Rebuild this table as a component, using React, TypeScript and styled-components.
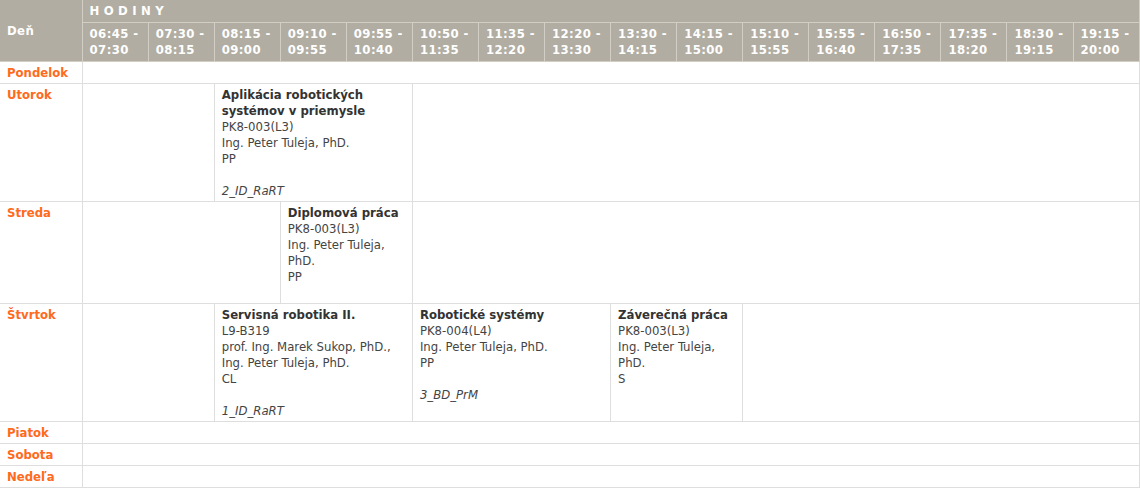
import React from 'react';
import styled, { createGlobalStyle } from 'styled-components';

const GlobalStyle = createGlobalStyle`
  body {
    margin: 0;
    background: #fff;
    font-family: 'DejaVu Sans Condensed', 'DejaVu Sans', sans-serif;
    font-size: 13px;
    color: #333;
  }
`;

const Table = styled.table`
  width: 1140px;
  border-collapse: collapse;
  table-layout: fixed;
  line-height: 16px;
`;

const HeadCell = styled.th<{ $spaced?: boolean }>`
  background: #b1ada2;
  color: #fff;
  font-weight: bold;
  text-align: left;
  white-space: nowrap;
  overflow: hidden;
  vertical-align: ${p => (p.$spaced ? 'top' : 'middle')};
  padding: ${p => (p.$spaced ? '3px 7px 3px' : '3px 6px 3px 7px')};
  border: 1px solid #d2cec6;
  border-top: none;
  letter-spacing: ${p => (p.$spaced ? '4.4px' : '0.4px')};
`;

const DayHead = styled(HeadCell)`
  border-left: none;
`;

const DayCell = styled.td`
  color: #ff6a1c;
  font-weight: bold;
  vertical-align: top;
  padding: 3px 7px 2px;
  border: 1px solid #dedede;
  border-left: none;
`;

const Cell = styled.td`
  vertical-align: top;
  padding: 3px 7px 2px;
  border: 1px solid #dedede;
`;

const Title = styled.div`
  font-weight: bold;
  color: #333;
`;

const Line = styled.div`
  color: #444;
`;

const Gap = styled.div`
  height: 16px;
`;

const Note = styled.div`
  font-style: italic;
  color: #444;
`;

type Lesson = {
  span: number;
  title?: string;
  lines?: string[];
  note?: string;
};

const slots = [
  ['06:45', '07:30'], ['07:30', '08:15'], ['08:15', '09:00'], ['09:10', '09:55'],
  ['09:55', '10:40'], ['10:50', '11:35'], ['11:35', '12:20'], ['12:20', '13:30'],
  ['13:30', '14:15'], ['14:15', '15:00'], ['15:10', '15:55'], ['15:55', '16:40'],
  ['16:50', '17:35'], ['17:35', '18:20'], ['18:30', '19:15'], ['19:15', '20:00'],
];

const days: { name: string; cells: Lesson[] }[] = [
  { name: 'Pondelok', cells: [{ span: 16 }] },
  {
    name: 'Utorok',
    cells: [
      { span: 2 },
      {
        span: 3,
        title: 'Aplikácia robotických systémov v priemysle',
        lines: ['PK8-003(L3)', 'Ing. Peter Tuleja, PhD.', 'PP'],
        note: '2_ID_RaRT',
      },
      { span: 11 },
    ],
  },
  {
    name: 'Streda',
    cells: [
      { span: 3 },
      {
        span: 2,
        title: 'Diplomová práca',
        lines: ['PK8-003(L3)', 'Ing. Peter Tuleja, PhD.', 'PP'],
      },
      { span: 11 },
    ],
  },
  {
    name: 'Štvrtok',
    cells: [
      { span: 2 },
      {
        span: 3,
        title: 'Servisná robotika II.',
        lines: ['L9-B319', 'prof. Ing. Marek Sukop, PhD.,', 'Ing. Peter Tuleja, PhD.', 'CL'],
        note: '1_ID_RaRT',
      },
      {
        span: 3,
        title: 'Robotické systémy',
        lines: ['PK8-004(L4)', 'Ing. Peter Tuleja, PhD.', 'PP'],
        note: '3_BD_PrM',
      },
      {
        span: 2,
        title: 'Záverečná práca',
        lines: ['PK8-003(L3)', 'Ing. Peter Tuleja, PhD.', 'S'],
      },
      { span: 6 },
    ],
  },
  { name: 'Piatok', cells: [{ span: 16 }] },
  { name: 'Sobota', cells: [{ span: 16 }] },
  { name: 'Nedeľa', cells: [{ span: 16 }] },
];

export default function App() {
  return (
    <>
      <GlobalStyle />
      <Table>
        <colgroup>
          <col style={{ width: 82 }} />
          {slots.map((_, i) => (
            <col key={i} style={{ width: 66 }} />
          ))}
        </colgroup>
        <thead>
          <tr>
            <DayHead rowSpan={2}>Deň</DayHead>
            <HeadCell $spaced colSpan={16}>HODINY</HeadCell>
          </tr>
          <tr>
            {slots.map(([from, to]) => (
              <HeadCell key={from}>
                {from} -<br />
                {to}
              </HeadCell>
            ))}
          </tr>
        </thead>
        <tbody>
          {days.map(day => (
            <tr key={day.name}>
              <DayCell>{day.name}</DayCell>
              {day.cells.map((c, i) => (
                <Cell key={i} colSpan={c.span}>
                  {c.title && <Title>{c.title}</Title>}
                  {c.lines?.map(l => <Line key={l}>{l}</Line>)}
                  {c.title && <Gap />}
                  {c.note && <Note>{c.note}</Note>}
                </Cell>
              ))}
            </tr>
          ))}
        </tbody>
      </Table>
    </>
  );
}
